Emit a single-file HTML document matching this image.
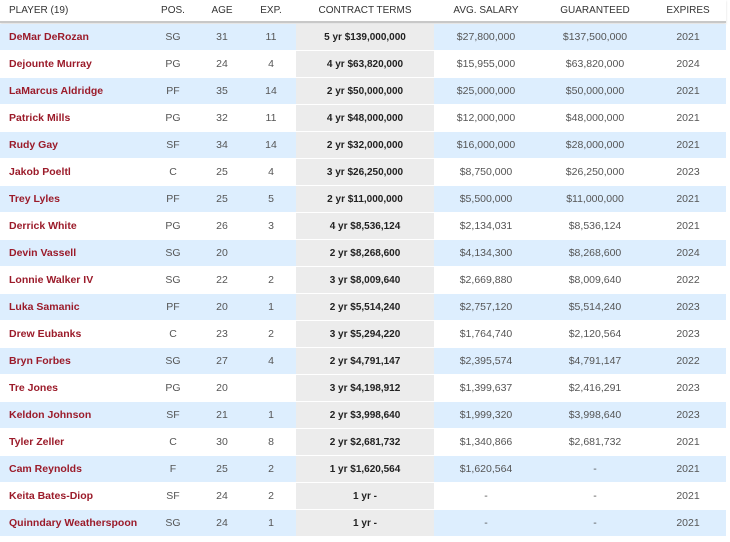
<!DOCTYPE html>
<html><head><meta charset="utf-8"><style>
*{margin:0;padding:0;box-sizing:border-box}
body{width:730px;height:542px;background:#fff;font-family:"Liberation Sans",Arial,sans-serif;position:relative;overflow:hidden}
.hdr{position:absolute;left:0;top:0;width:726px;height:23px;border-bottom:2px solid #c8c8c8;box-shadow:0 1px 2px rgba(0,0,0,.15);font-size:10px;color:#333}
.row{position:absolute;left:0;width:726px;height:26px;font-size:10.5px;color:#555}
.row.b{background:#ddeefe}
.c{position:absolute;top:0;height:100%;line-height:27px;text-align:center}
.hdr .c{line-height:21px}
.n{left:9px;text-align:left;color:#9b1b2a;font-weight:bold}
.hdr .n{color:#333;font-weight:normal}
.p{left:148px;width:50px}.a{left:197px;width:50px}.e{left:246px;width:50px}
.k{left:296px;width:138px;background:#ececec;color:#222;font-weight:bold;font-size:10px}
.hdr .k{background:none;color:#333;font-weight:normal}
.s{left:436px;width:100px}.g{left:545px;width:100px}.x{left:658px;width:60px}
</style></head><body>
<div class="hdr"><div class="c n">PLAYER (19)</div><div class="c p">POS.</div><div class="c a">AGE</div><div class="c e">EXP.</div><div class="c k">CONTRACT TERMS</div><div class="c s">AVG. SALARY</div><div class="c g">GUARANTEED</div><div class="c x">EXPIRES</div></div>
<div id="t"></div>
<script>
var d=[
["DeMar DeRozan","SG","31","11","5 yr $139,000,000","$27,800,000","$137,500,000","2021"],
["Dejounte Murray","PG","24","4","4 yr $63,820,000","$15,955,000","$63,820,000","2024"],
["LaMarcus Aldridge","PF","35","14","2 yr $50,000,000","$25,000,000","$50,000,000","2021"],
["Patrick Mills","PG","32","11","4 yr $48,000,000","$12,000,000","$48,000,000","2021"],
["Rudy Gay","SF","34","14","2 yr $32,000,000","$16,000,000","$28,000,000","2021"],
["Jakob Poeltl","C","25","4","3 yr $26,250,000","$8,750,000","$26,250,000","2023"],
["Trey Lyles","PF","25","5","2 yr $11,000,000","$5,500,000","$11,000,000","2021"],
["Derrick White","PG","26","3","4 yr $8,536,124","$2,134,031","$8,536,124","2021"],
["Devin Vassell","SG","20","","2 yr $8,268,600","$4,134,300","$8,268,600","2024"],
["Lonnie Walker IV","SG","22","2","3 yr $8,009,640","$2,669,880","$8,009,640","2022"],
["Luka Samanic","PF","20","1","2 yr $5,514,240","$2,757,120","$5,514,240","2023"],
["Drew Eubanks","C","23","2","3 yr $5,294,220","$1,764,740","$2,120,564","2023"],
["Bryn Forbes","SG","27","4","2 yr $4,791,147","$2,395,574","$4,791,147","2022"],
["Tre Jones","PG","20","","3 yr $4,198,912","$1,399,637","$2,416,291","2023"],
["Keldon Johnson","SF","21","1","2 yr $3,998,640","$1,999,320","$3,998,640","2023"],
["Tyler Zeller","C","30","8","2 yr $2,681,732","$1,340,866","$2,681,732","2021"],
["Cam Reynolds","F","25","2","1 yr $1,620,564","$1,620,564","-","2021"],
["Keita Bates-Diop","SF","24","2","1 yr -","-","-","2021"],
["Quinndary Weatherspoon","SG","24","1","1 yr -","-","-","2021"]];
var cl=["n","p","a","e","k","s","g","x"],h="";
d.forEach(function(r,i){h+='<div class="row'+(i%2==0?' b':'')+'" style="top:'+(24+27*i)+'px">';r.forEach(function(v,j){h+='<div class="c '+cl[j]+'">'+v+'</div>'});h+='</div>'});
document.getElementById("t").innerHTML=h;
</script>
</body></html>
